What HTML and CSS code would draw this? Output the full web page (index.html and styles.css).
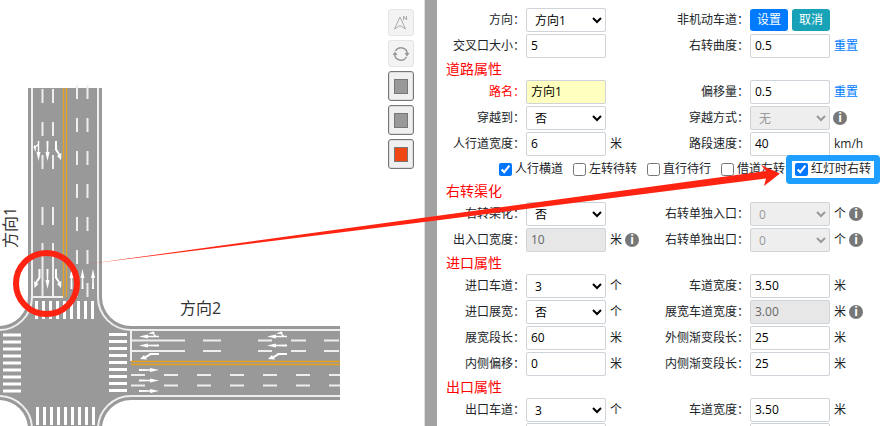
FILE: index.html
```html
<!DOCTYPE html>
<html lang="zh-CN">

<head>
    <meta charset="UTF-8">
    <title>交叉口设计</title>
    <link rel="stylesheet" href="styles.css">
</head>

<body>
    <main class="map">
        <svg class="road" width="340" height="426" viewBox="0 0 340 426">
            <defs>
                <path id="straight" d="M-1 0H1L.7 11H2L0 20L-2 11H-.7Z" />
                <path id="turn" d="M-1 0H1V8L4 13L5.500 12L5 19L1 15L2.500 14L-1 9Z" />
                <path id="both" d="M-.7 0H.7V11H2L0 20L-2 11H-.7V5L-2.500 6L-3 11L-5 6L-4 4L-3 5L-.7 3Z" />
            </defs>
            <!-- chaussée -->
            <path fill="#999" d="M28 88H102V297A29 29 0 0 0 131 326H340V400H131A29 29 0 0 0 102 429H28A29 29 0 0 0 -1 400V326A29 29 0 0 0 28 297Z" />
            <g fill="none" stroke="#eee" stroke-width="2">
                <path d="M32 88V297A33 33 0 0 1 -1 330M98 88V297A33 33 0 0 0 131 330H340M340 396H131A33 33 0 0 0 98 429M-1 396A33 33 0 0 1 32 429" />
                <path d="M42.500 89V103M42.500 122V136M42.500 155V169M42.500 207V225M42.500 243V297M53 89V103M53 122V136M53 155V169M53 207V225M53 243V297" />
                <path stroke-dasharray="14 19" d="M77 85V297M87.500 85V297" />
                <path d="M131 340.500H185M203 340.500H221M258 340.500H272M291 340.500H306M324 340.500H339M131 351H185M203 351H221M258 351H272M291 351H306M324 351H339" />
                <path stroke-dasharray="14 19" d="M131 375H340M131 385.500H340" />
                <path d="M32 297H63M131 330V361" />
            </g>
            <path fill="none" stroke="#e9a21c" stroke-width="1.300" d="M63.500 88V297M66.500 88V297M131 361.500H340M131 364.500H340" />
            <!-- 人行横道 -->
            <g fill="none" stroke="#fff" stroke-width="18">
                <path stroke-dasharray="3 4" d="M35 310H95M36 416H96" />
                <path stroke-dasharray="3 4" d="M12 333.500V393M118 333V393" />
            </g>
            <g fill="#fff">
                <use href="#both" transform="translate(38.500 141)" />
                <use href="#straight" transform="translate(47.500 141)" />
                <use href="#turn" transform="translate(56 141)" />
                <use href="#turn" transform="translate(39.500 269) scale(-1 1)" />
                <use href="#straight" transform="translate(47.500 269)" />
                <use href="#turn" transform="translate(56 269)" />
                <use href="#straight" transform="translate(71.500 289) rotate(180)" />
                <use href="#straight" transform="translate(82.500 289) rotate(180)" />
                <use href="#straight" transform="translate(93 289) rotate(180)" />
                <use href="#both" transform="translate(159 336.500) rotate(90)" />
                <use href="#straight" transform="translate(159 345.500) rotate(90)" />
                <use href="#turn" transform="translate(159 354) rotate(90)" />
                <use href="#both" transform="translate(287 336.500) rotate(90)" />
                <use href="#straight" transform="translate(287 345.500) rotate(90)" />
                <use href="#turn" transform="translate(287 354) rotate(90)" />
                <use href="#straight" transform="translate(139 370) rotate(-90)" />
                <use href="#straight" transform="translate(139 380.500) rotate(-90)" />
                <use href="#straight" transform="translate(139 391) rotate(-90)" />
            </g>
            <text class="road-name" x="180" y="314">方向2</text>
            <text class="road-name" transform="translate(16 248) rotate(-90)">方向1</text>
        </svg>
        <div class="tools">
            <button class="tool" type="button" aria-label="指北针">
                <svg width="18" height="18" viewBox="0 0 18 18" fill="none" stroke="#aaa"><path d="M8 3L2.500 15L8 11.500L13.500 15Z" /><path d="M11.500 6V2L14.500 6V2" /></svg>
            </button>
            <button class="tool" type="button" aria-label="旋转">
                <svg width="18" height="18" viewBox="0 0 18 18" fill="none" stroke="#999" stroke-width="1.500"><path d="M3.500 6A6.300 6.300 0 0 1 15.300 9M14.500 12A6.300 6.300 0 0 1 2.700 9" /><path fill="#999" stroke="none" d="M.5 10L3 6.500L5.500 10ZM12.500 8H17.500L15 11.500Z" /></svg>
            </button>
            <button class="tool layer" type="button" aria-label="图层1"><span class="swatch"></span></button>
            <button class="tool layer" type="button" aria-label="图层2"><span class="swatch"></span></button>
            <button class="tool layer" type="button" aria-label="图层3"><span class="swatch orange"></span></button>
        </div>
    </main>
    <div class="divider"></div>

    <form class="panel">
        <div class="row">
            <label for="dir">方向：</label>
            <div class="field"><select id="dir"><option>方向1</option></select></div>
            <span class="label">非机动车道：</span>
            <div class="field"><button class="btn" type="button">设置</button><button class="btn cancel" type="button">取消</button></div>
        </div>
        <div class="row">
            <label for="size">交叉口大小：</label>
            <div class="field"><input id="size" type="text" value="5"></div>
            <label for="curve">右转曲度：</label>
            <div class="field"><input id="curve" type="text" value="0.5"><a href="#">重置</a></div>
        </div>

        <h2>道路属性</h2>
        <div class="row">
            <label class="required" for="name">路名：</label>
            <div class="field"><input id="name" class="active" type="text" value="方向1"></div>
            <label for="offset">偏移量：</label>
            <div class="field"><input id="offset" type="text" value="0.5"><a href="#">重置</a></div>
        </div>
        <div class="row">
            <label for="cross">穿越到：</label>
            <div class="field"><select id="cross"><option>否</option></select></div>
            <label for="crossmode">穿越方式：</label>
            <div class="field"><select id="crossmode" disabled><option>无</option></select><i class="info">i</i></div>
        </div>
        <div class="row">
            <label for="walk">人行道宽度：</label>
            <div class="field"><input id="walk" type="text" value="6">米</div>
            <label for="speed">路段速度：</label>
            <div class="field"><input id="speed" type="text" value="40">km/h</div>
        </div>
        <div class="checks">
            <label><input type="checkbox" checked>人行横道</label>
            <label><input type="checkbox">左转待转</label>
            <label><input type="checkbox">直行待行</label>
            <label><input type="checkbox">借道左转</label>
            <label class="highlight"><input type="checkbox" checked>红灯时右转</label>
        </div>

        <h2>右转渠化</h2>
        <div class="row">
            <label for="channel">右转渠化：</label>
            <div class="field"><select id="channel"><option>否</option></select></div>
            <label for="rin">右转单独入口：</label>
            <div class="field"><select id="rin" disabled><option>0</option></select>个<i class="info">i</i></div>
        </div>
        <div class="row">
            <label for="gate">出入口宽度：</label>
            <div class="field"><input id="gate" type="text" value="10" disabled>米<i class="info">i</i></div>
            <label for="rout">右转单独出口：</label>
            <div class="field"><select id="rout" disabled><option>0</option></select>个<i class="info">i</i></div>
        </div>

        <h2>进口属性</h2>
        <div class="row">
            <label for="inlane">进口车道：</label>
            <div class="field"><select id="inlane"><option>3</option></select>个</div>
            <label for="inwidth">车道宽度：</label>
            <div class="field"><input id="inwidth" type="text" value="3.50">米</div>
        </div>
        <div class="row">
            <label for="inwiden">进口展宽：</label>
            <div class="field"><select id="inwiden"><option>否</option></select>个</div>
            <label for="wwidth">展宽车道宽度：</label>
            <div class="field"><input id="wwidth" type="text" value="3.00" disabled>米<i class="info">i</i></div>
        </div>
        <div class="row">
            <label for="wlen">展宽段长：</label>
            <div class="field"><input id="wlen" type="text" value="60">米</div>
            <label for="outer">外侧渐变段长：</label>
            <div class="field"><input id="outer" type="text" value="25">米</div>
        </div>
        <div class="row">
            <label for="inoff">内侧偏移：</label>
            <div class="field"><input id="inoff" type="text" value="0">米</div>
            <label for="inner">内侧渐变段长：</label>
            <div class="field"><input id="inner" type="text" value="25">米</div>
        </div>

        <h2>出口属性</h2>
        <div class="row">
            <label for="outlane">出口车道：</label>
            <div class="field"><select id="outlane"><option>3</option></select>个</div>
            <label for="outwidth">车道宽度：</label>
            <div class="field"><input id="outwidth" type="text" value="3.50">米</div>
        </div>
        <div class="row">
            <span></span>
            <div class="field"><input type="text" aria-label="出口展宽"></div>
            <span></span>
            <div class="field"><input type="text" aria-label="展宽车道宽度"></div>
        </div>
    </form>

    <svg class="pointer" width="884" height="426" viewBox="0 0 884 426">
        <circle cx="46.500" cy="283.500" r="30.500" fill="none" stroke="#ff2412" stroke-width="6" />
        <path fill="#ff2412" d="M88 264L436 216L766 171L761 165L780 173.500L764 186L766 178.500L436 220.500Z" />
    </svg>
</body>

</html>
```

FILE: styles.css
```css
* {
    box-sizing: border-box;
}

body {
    margin: 0;
    height: 100vh;
    display: flex;
    position: relative;
    overflow: hidden;
    background: #fff;
    color: #212529;
    font: 12px/24px "Open Sans", "Noto Sans CJK SC", sans-serif;
}

/* carte */
.map {
    flex: 1;
    display: flex;
    justify-content: space-between;
    align-items: flex-start;
    padding-right: 10px;
}

.road-name {
    font-size: 16px;
    fill: #333;
}

.tools {
    display: flex;
    flex-direction: column;
    gap: 4px;
    padding-top: 9px;
}

.tool {
    display: flex;
    align-items: center;
    justify-content: center;
    width: 26px;
    height: 27px;
    padding: 0;
    background: #f3f3f3;
    border: 1px solid #e4e4e4;
    border-radius: 3px;
}

.layer {
    height: 30px;
    background: #f0f0f0;
    border-color: #777;
    box-shadow: inset 0 0 0 1px #ddd;
}

.swatch {
    width: 14px;
    height: 15px;
    background: #999;
    border: 1px solid #777;
}

.orange {
    background: #f04614;
}

.divider {
    width: 13px;
    background: #a2a2a2;
    border-left: 1px solid #ddd;
}

/* formulaire */
.panel {
    width: 447px;
    padding-top: 7px;
}

.row {
    display: grid;
    grid-template-columns: 89px 135px 89px 1fr;
    height: 24px;
    margin-bottom: 2px;
}

.row label,
.row .label {
    padding: 1px 1px 0 0;
    text-align: right;
}

.row .required {
    color: #f00;
}

.field {
    display: flex;
    align-items: center;
    gap: 4px;
    white-space: nowrap;
}

.field input,
.field select {
    width: 80px;
    height: 24px;
    padding: 1px 4px 0;
    font: inherit;
    color: #000;
    background: #fff;
    border: 1px solid #ced4da;
    border-radius: 2px;
}

.field .active {
    background: #ffffbf;
}

.field input:disabled {
    background: #e7e7e7;
    color: #666;
}

.field select:disabled {
    background: #eee;
    color: #999;
    opacity: 1;
}

.btn {
    height: 22px;
    padding: 0 7px;
    font: inherit;
    line-height: 20px;
    color: #fff;
    background: #007bff;
    border: none;
    border-radius: 3px;
}

.cancel {
    background: #17a2b8;
}

a {
    color: #007bff;
    text-decoration: none;
}

.info {
    width: 14px;
    height: 14px;
    margin-left: -1px;
    border-radius: 50%;
    background: #777;
    color: #fff;
    font: bold 12px/14px "Open Sans", sans-serif;
    text-align: center;
}

h2 {
    margin: 0 0 0 9px;
    font-size: 14px;
    font-weight: normal;
    line-height: 20px;
    color: #f00;
}

.checks {
    display: flex;
    gap: 10px;
    height: 24px;
    padding-left: 62px;
}

.checks label {
    display: flex;
    align-items: center;
    gap: 3px;
    white-space: nowrap;
}

.checks input {
    width: 13px;
    height: 13px;
    margin: 0;
}

.highlight {
    position: relative;
}

.highlight::before {
    content: "";
    position: absolute;
    inset: -2px -9px -3px;
    border: 6px solid #1e9fff;
    border-radius: 4px;
}

.pointer {
    position: absolute;
    top: 0;
    left: 0;
    pointer-events: none;
}
```
